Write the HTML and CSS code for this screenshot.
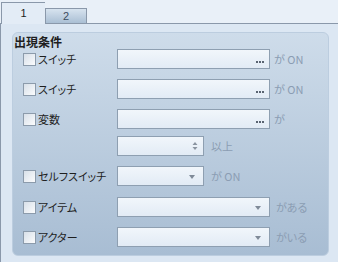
FILE: index.html
```html
<!DOCTYPE html>
<html lang="ja">
<head>
  <meta charset="UTF-8" />
  <title>出現条件</title>
  <link rel="stylesheet" href="styles.css">
</head>
<body>

  <div class="tabs">
    <div class="tab active">1</div>
    <div class="tab">2</div>
  </div>

  <div class="panel">
    <div class="group">
      <div class="group-title">出現条件</div>

      <div class="row">
        <label class="check"><span class="box"></span>スイッチ</label>
        <div class="field wide"><span class="dots"><i></i><i></i><i></i></span></div>
        <span class="suffix">が ON</span>
      </div>

      <div class="row">
        <label class="check"><span class="box"></span>スイッチ</label>
        <div class="field wide"><span class="dots"><i></i><i></i><i></i></span></div>
        <span class="suffix">が ON</span>
      </div>

      <div class="row">
        <label class="check"><span class="box"></span>変数</label>
        <div class="field wide"><span class="dots"><i></i><i></i><i></i></span></div>
        <span class="suffix">が</span>
      </div>

      <div class="row spin-row">
        <span class="check"></span>
        <div class="field narrow">
          <span class="spin">
            <svg width="6" height="10" viewBox="0 0 6 10"><path d="M3 1 L5.5 4 L0.5 4 Z M3 9 L5.5 6 L0.5 6 Z" fill="#8a94a0"/></svg>
          </span>
        </div>
        <span class="suffix short">以上</span>
      </div>

      <div class="row">
        <label class="check"><span class="box"></span>セルフスイッチ</label>
        <div class="field narrow"><span class="arrow"></span></div>
        <span class="suffix short">が ON</span>
      </div>

      <div class="row item-row">
        <label class="check"><span class="box"></span>アイテム</label>
        <div class="field wide"><span class="arrow"></span></div>
        <span class="suffix far">がある</span>
      </div>

      <div class="row">
        <label class="check"><span class="box"></span>アクター</label>
        <div class="field wide"><span class="arrow"></span></div>
        <span class="suffix far">がいる</span>
      </div>
    </div>
  </div>

</body>
</html>
```

FILE: styles.css
```css
body {
  margin: 0;
  width: 338px;
  height: 262px;
  overflow: hidden;
  background-color: #e9f0f8;
  font-family: "Noto Sans CJK JP", "DejaVu Sans", sans-serif;
  font-size: 11px;
  color: #1e1e1e;
  font-feature-settings: "palt";
}

.tabs {
  display: flex;
  align-items: flex-end;
  height: 23px;
  padding-left: 1px;
  border-bottom: 1px solid #8a98aa;
}

.tab {
  width: 40px;
  height: 14px;
  border: 1px solid #8a98aa;
  border-bottom: none;
  background: linear-gradient(#d7e3ef, #aabfd4);
  color: #3d4d60;
  font-family: "Liberation Sans", sans-serif;
  font-size: 11px;
  line-height: 14px;
  text-align: center;
}

.tab.active {
  width: 43px;
  height: 21px;
  line-height: 20px;
  background: #e3ecf6;
  color: #1e1e1e;
  border-right: none;
  margin-bottom: -1px;
}

.panel {
  height: 238px;
  border-left: 1px solid #8a98aa;
  background-color: #dce7f3;
  padding: 8px 0 0 11px;
}

.group {
  width: 312px;
  height: 220px;
  padding: 2px 2px 0 1px;
  border: 1px solid #bccddf;
  border-radius: 6px;
  background: linear-gradient(#cedcea, #a8bdd3);
}

.group-title {
  font-size: 12px;
  font-weight: bold;
  line-height: 14px;
}

.row {
  display: flex;
  align-items: center;
  height: 20px;
  margin-top: 10px;
}

.group-title + .row {
  margin-top: 0;
}

.spin-row {
  margin-top: 7px;
}

.item-row {
  margin-top: 11px;
}

.check {
  display: flex;
  align-items: center;
  width: 94px;
  margin-left: 9px;
  line-height: 14px;
}

.box {
  width: 11px;
  height: 11px;
  margin-right: 2px;
  border: 1px solid #8c9bab;
  background: linear-gradient(135deg, #d8e0e9, #fbfcfd);
}

.field {
  position: relative;
  height: 18px;
  border: 1px solid #8e9fb1;
  background: linear-gradient(#f1f6fb, #e2ebf5);
}

.field.wide {
  width: 151px;
}

.field.narrow {
  width: 85px;
}

.dots {
  position: absolute;
  right: 5px;
  bottom: 5px;
  display: flex;
  gap: 1px;
}

.dots i {
  width: 2px;
  height: 2px;
  background-color: #5a6472;
}

.arrow {
  position: absolute;
  right: 8px;
  top: 8px;
  border-left: 3px solid transparent;
  border-right: 3px solid transparent;
  border-top: 4px solid #7f8a98;
}

.spin {
  position: absolute;
  right: 5px;
  top: 4px;
  display: flex;
}

.suffix {
  margin-left: 4px;
  color: #8b9db3;
}

.suffix.short {
  margin-left: 7px;
}

.suffix.far {
  margin-left: 6px;
}
```
